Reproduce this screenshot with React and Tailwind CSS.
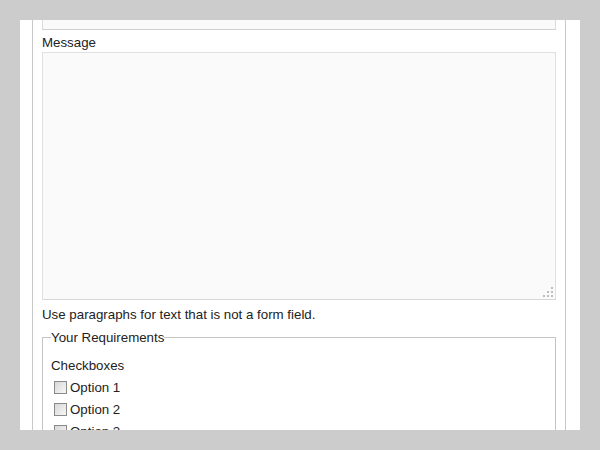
import React from "react";

const options = ["Option 1", "Option 2", "Option 3"];

const Checkbox = ({ label }) => (
	<label className="flex items-center h-[22px] pl-[3px]">
		<input
			type="checkbox"
			className="appearance-none w-[13px] h-[13px] border border-[#8a8a8a] bg-gradient-to-br from-[#d8d8d8] to-[#f7f7f7] m-0"
		/>
		<span className="ml-[3px] leading-[17px]">{label}</span>
	</label>
);

export default function App() {
	return (
		<div
			className="w-[600px] h-[450px] bg-[#cccccc] p-[20px] text-[13.3px] text-[#222]"
			style={{ fontFamily: '"Liberation Sans", Arial, sans-serif' }}
		>
			<div className="h-[410px] bg-white overflow-hidden pl-[12px] pr-[14px]">
				<div className="flow-root h-full border-x border-[#c8c8c8] px-[9px]">
					<div className="-mt-[20px]">
						<input
							type="text"
							className="block w-full h-[30px] border border-[#dcdcdc] border-b-[#d0d0d0] bg-[#fafafa] outline-none"
						/>

						<label className="block mt-[4px] mb-[1px] leading-[17px]">Message</label>
						<div className="relative">
							<textarea className="block w-full h-[248px] border border-[#e0e0e0] border-b-[#d6d6d6] bg-[#fafafa] resize-none outline-none" />
							<svg className="absolute right-[2px] bottom-[2px]" width="12" height="12" viewBox="0 0 12 12">
								<rect x="9" y="1" width="2" height="2" fill="#bdbdbd" />
								<rect x="5" y="5" width="2" height="2" fill="#bdbdbd" />
								<rect x="9" y="5" width="2" height="2" fill="#bdbdbd" />
								<rect x="1" y="9" width="2" height="2" fill="#bdbdbd" />
								<rect x="5" y="9" width="2" height="2" fill="#bdbdbd" />
								<rect x="9" y="9" width="2" height="2" fill="#bdbdbd" />
							</svg>
						</div>

						<p className="mt-[6px] leading-[17px]">Use paragraphs for text that is not a form field.</p>

						<fieldset className="mt-[6px] border border-[#c4c4c4] pl-[8px] pr-[8px] pb-[10px]">
							<legend className="leading-[17px]">Your Requirements</legend>
							<div className="mt-[11px] leading-[17px]">Checkboxes</div>
							<div className="mt-[2px]">
								{options.map((o) => (
									<Checkbox key={o} label={o} />
								))}
							</div>
						</fieldset>
					</div>
				</div>
			</div>
		</div>
	);
}
